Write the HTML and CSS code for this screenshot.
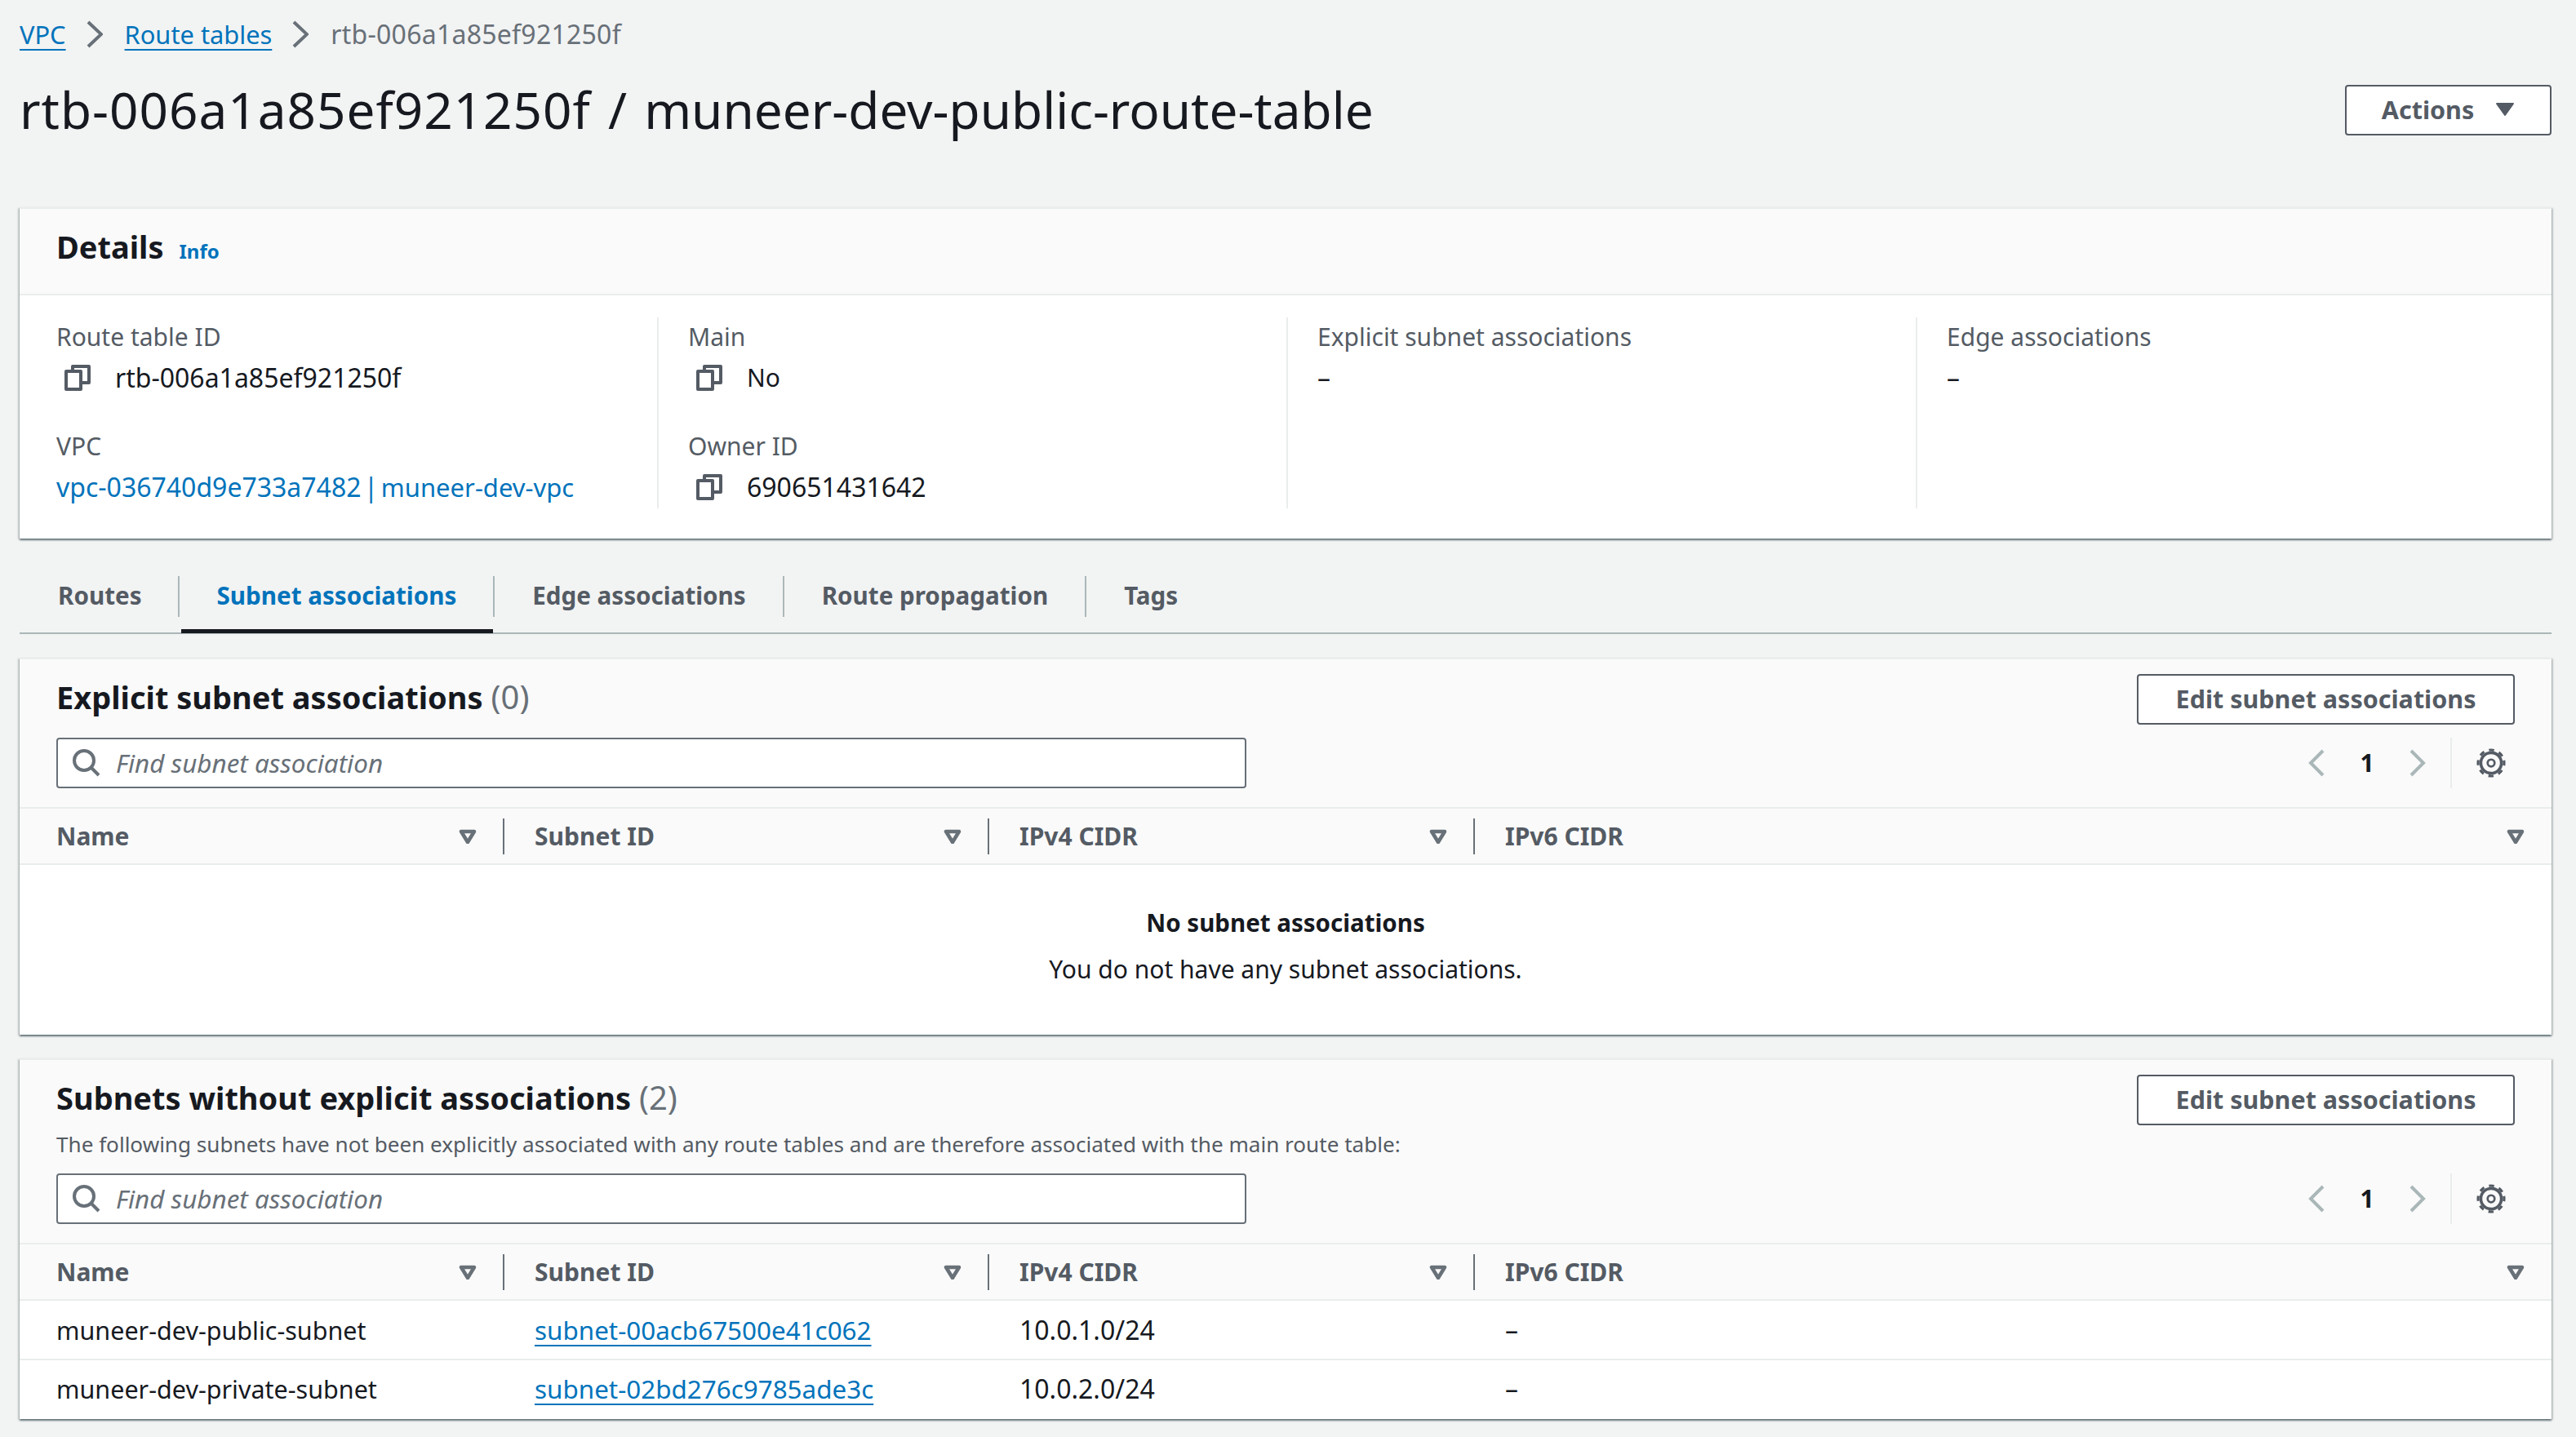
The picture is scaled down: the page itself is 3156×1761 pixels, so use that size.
FILE: index.html
```html
<!DOCTYPE html>
<html lang="en">
<head>
  <meta charset="UTF-8">
  <title>rtb-006a1a85ef921250f / muneer-dev-public-route-table</title>
  <link rel="stylesheet" href="styles.css">
</head>
<body>
  <nav class="crumbs">
    <a href="#">VPC</a>
    <svg class="crumb-sep" viewBox="0 0 20 34"><path d="M2 2l16 15L2 32"/></svg>
    <a href="#">Route tables</a>
    <svg class="crumb-sep" viewBox="0 0 20 34"><path d="M2 2l16 15L2 32"/></svg>
    <span class="crumb-id">rtb-006a1a85ef921250f</span>
  </nav>

  <header class="page-head">
    <h1><span class="title-id">rtb-006a1a85ef921250f</span> / muneer-dev-public-route-table</h1>
    <button class="btn btn-actions" type="button">Actions
      <svg class="caret" viewBox="0 0 24 18"><path d="M2 2h20L12 16z"/></svg>
    </button>
  </header>

  <section class="card card-details">
    <div class="details-head">
      <h2>Details</h2>
      <a class="info" href="#">Info</a>
    </div>
    <div class="details-body">
      <div class="col">
        <div class="item">
          <div class="label">Route table ID</div>
          <div class="value">
            <svg class="copy" viewBox="0 0 16 16"><path d="M1 4h9v11H1z"/><path d="M5 4V1h10v10h-5"/></svg>
            rtb-006a1a85ef921250f
          </div>
        </div>
        <div class="item">
          <div class="label">VPC</div>
          <div class="value plain"><a class="vpc-link" href="#">vpc-036740d9e733a7482 | <span>muneer-dev-vpc</span></a></div>
        </div>
      </div>
      <div class="col">
        <div class="item">
          <div class="label">Main</div>
          <div class="value">
            <svg class="copy" viewBox="0 0 16 16"><path d="M1 4h9v11H1z"/><path d="M5 4V1h10v10h-5"/></svg>
            <span class="value-word">No</span>
          </div>
        </div>
        <div class="item">
          <div class="label">Owner ID</div>
          <div class="value">
            <svg class="copy" viewBox="0 0 16 16"><path d="M1 4h9v11H1z"/><path d="M5 4V1h10v10h-5"/></svg>
            690651431642
          </div>
        </div>
      </div>
      <div class="col">
        <div class="item">
          <div class="label">Explicit subnet associations</div>
          <div class="value plain">–</div>
        </div>
      </div>
      <div class="col">
        <div class="item">
          <div class="label">Edge associations</div>
          <div class="value plain">–</div>
        </div>
      </div>
    </div>
  </section>

  <div class="tabs">
    <a class="tab" href="#">Routes</a>
    <a class="tab active" href="#">Subnet associations</a>
    <a class="tab" href="#">Edge associations</a>
    <a class="tab" href="#">Route propagation</a>
    <a class="tab" href="#">Tags</a>
  </div>

  <section class="card card-explicit">
    <div class="table-head">
      <div class="title-row">
        <h2>Explicit subnet associations <span class="count">(0)</span></h2>
        <button class="btn btn-edit" type="button">Edit subnet associations</button>
      </div>
      <div class="tools">
        <div class="search">
          <svg class="search-icon" viewBox="0 0 34 34"><circle cx="14" cy="14" r="12"/><path d="M23 23l9 9"/></svg>
          <span>Find subnet association</span>
        </div>
        <div class="pager">
          <svg class="pg" viewBox="0 0 20 34"><path d="M18 2L3 17l15 15"/></svg>
          <b>1</b>
          <svg class="pg" viewBox="0 0 20 34"><path d="M2 2l15 15L2 32"/></svg>
          <div class="pager-line"></div>
          <svg class="gear" viewBox="0 0 16 16"><circle class="teeth" cx="8" cy="8" r="7.1" transform="rotate(-11.25 8 8)"/><circle cx="8" cy="8" r="5.6"/><circle class="hub" cx="8" cy="8" r="1.9"/></svg>
        </div>
      </div>
    </div>
    <div class="row row-head">
      <div class="cell"><div class="cell-in">Name<svg class="sort" viewBox="0 0 22 18"><path d="M3 3h16l-8 13z"/></svg></div></div>
      <div class="cell"><div class="cell-in">Subnet ID<svg class="sort" viewBox="0 0 22 18"><path d="M3 3h16l-8 13z"/></svg></div></div>
      <div class="cell"><div class="cell-in">IPv4 CIDR<svg class="sort" viewBox="0 0 22 18"><path d="M3 3h16l-8 13z"/></svg></div></div>
      <div class="cell"><div class="cell-in">IPv6 CIDR<svg class="sort" viewBox="0 0 22 18"><path d="M3 3h16l-8 13z"/></svg></div></div>
    </div>
    <div class="empty">
      <b>No subnet associations</b>
      <p>You do not have any subnet associations.</p>
    </div>
  </section>

  <section class="card card-implicit">
    <div class="table-head">
      <div class="title-row">
        <h2>Subnets without explicit associations <span class="count">(2)</span></h2>
        <button class="btn btn-edit" type="button">Edit subnet associations</button>
      </div>
      <p class="desc">The following subnets have not been explicitly associated with any route tables and are therefore associated with the main route table:</p>
      <div class="tools">
        <div class="search">
          <svg class="search-icon" viewBox="0 0 34 34"><circle cx="14" cy="14" r="12"/><path d="M23 23l9 9"/></svg>
          <span>Find subnet association</span>
        </div>
        <div class="pager">
          <svg class="pg" viewBox="0 0 20 34"><path d="M18 2L3 17l15 15"/></svg>
          <b>1</b>
          <svg class="pg" viewBox="0 0 20 34"><path d="M2 2l15 15L2 32"/></svg>
          <div class="pager-line"></div>
          <svg class="gear" viewBox="0 0 16 16"><circle class="teeth" cx="8" cy="8" r="7.1" transform="rotate(-11.25 8 8)"/><circle cx="8" cy="8" r="5.6"/><circle class="hub" cx="8" cy="8" r="1.9"/></svg>
        </div>
      </div>
    </div>
    <div class="row row-head">
      <div class="cell"><div class="cell-in">Name<svg class="sort" viewBox="0 0 22 18"><path d="M3 3h16l-8 13z"/></svg></div></div>
      <div class="cell"><div class="cell-in">Subnet ID<svg class="sort" viewBox="0 0 22 18"><path d="M3 3h16l-8 13z"/></svg></div></div>
      <div class="cell"><div class="cell-in">IPv4 CIDR<svg class="sort" viewBox="0 0 22 18"><path d="M3 3h16l-8 13z"/></svg></div></div>
      <div class="cell"><div class="cell-in">IPv6 CIDR<svg class="sort" viewBox="0 0 22 18"><path d="M3 3h16l-8 13z"/></svg></div></div>
    </div>
    <div class="row row-body">
      <div class="cell cell-name">muneer-dev-public-subnet</div>
      <div class="cell"><a href="#">subnet-00acb67500e41c062</a></div>
      <div class="cell">10.0.1.0/24</div>
      <div class="cell">–</div>
    </div>
    <div class="row row-body">
      <div class="cell cell-name">muneer-dev-private-subnet</div>
      <div class="cell"><a href="#">subnet-02bd276c9785ade3c</a></div>
      <div class="cell">10.0.2.0/24</div>
      <div class="cell">–</div>
    </div>
  </section>
</body>
</html>
```

FILE: styles.css
```css
* {
  box-sizing: border-box;
}
body {
  margin: 0;
  padding: 0 30px 22px 24px;
  background-color: #f2f3f3;
  color: #16191f;
  font-family: "Noto Sans", Arial, sans-serif;
  font-size: 32px;
  line-height: 48px;
}
a {
  color: #0073bb;
  text-decoration: none;
}
h1, h2, p {
  margin: 0;
  font-weight: normal;
}

/* breadcrumb */
.crumbs {
  display: flex;
  align-items: center;
  height: 84px;
  color: #687078;
  font-size: 30.8px;
}
.crumbs a {
  text-decoration: underline;
  text-decoration-thickness: 2px;
  text-underline-offset: 6px;
}
.crumb-sep {
  width: 20px;
  height: 34px;
  margin: 0 27px 0 25px;
  fill: none;
  stroke: #687078;
  stroke-width: 4;
}
.crumb-id {
  font-size: 32px;
  letter-spacing: 0.25px;
}

/* title */
.page-head {
  display: flex;
  justify-content: space-between;
  align-items: flex-start;
  height: 170px;
  padding-top: 20px;
}
h1 {
  font-size: 62px;
  line-height: 60px;
  word-spacing: 5px;
}
.title-id {
  letter-spacing: 1px;
}
.btn {
  display: flex;
  align-items: center;
  justify-content: center;
  padding: 0 0 2px;
  border: 2px solid #545b64;
  border-radius: 4px;
  background: #fff;
  color: #545b64;
  font-family: inherit;
  font-size: 30.5px;
  font-weight: 700;
}
.btn-actions {
  width: 253px;
  height: 62px;
  gap: 26px;
}
.caret {
  width: 24px;
  height: 18px;
  fill: #545b64;
  stroke: #545b64;
  stroke-width: 2;
  stroke-linejoin: round;
}

/* cards */
.card {
  background: #fff;
  border-top: 2px solid #eaeded;
  box-shadow: 0 2px 2px rgba(0, 28, 36, 0.5), 2px 1px 2px rgba(0, 28, 36, 0.15), -2px 1px 2px rgba(0, 28, 36, 0.15);
}
.details-head {
  display: flex;
  align-items: baseline;
  gap: 19px;
  height: 106px;
  padding: 18px 46px 0 45px;
  background: #fafafa;
  border-bottom: 2px solid #eaeded;
}
h2 {
  font-size: 38px;
  line-height: 56px;
  font-weight: 700;
}
.info {
  font-size: 24px;
  font-weight: 700;
}
.details-body {
  display: grid;
  grid-template-columns: 781px 771px 771px 1fr;
  padding: 27px 0 37px;
}
.col {
  display: flex;
  flex-direction: column;
  gap: 36px;
  height: 234px;
  padding-left: 36px;
  border-left: 2px solid #eaeded;
}
.col:first-child {
  padding-left: 45px;
  border-left: 0;
}
.label {
  height: 48px;
  color: #545b64;
  font-size: 30px;
}
.value {
  display: flex;
  align-items: center;
  gap: 30px;
  height: 50px;
  padding: 2px 0 0 10px;
}
.value.plain {
  padding-left: 0;
}
.value-word {
  font-size: 30px;
}
.vpc-link {
  word-spacing: -5px;
}
.vpc-link span {
  font-size: 31px;
}
.copy {
  width: 32px;
  height: 32px;
  fill: none;
  stroke: #545b64;
  stroke-width: 2;
  stroke-linejoin: round;
}

/* tabs */
.tabs {
  display: flex;
  align-items: flex-start;
  height: 117px;
  padding-top: 46px;
  border-bottom: 2px solid #aab7b8;
}
.tab {
  position: relative;
  height: 50px;
  padding: 0 45px 0 46px;
  color: #545b64;
  font-size: 29.6px;
  font-weight: 700;
  border-left: 2px solid #aab7b8;
}
.tab:first-child {
  padding: 0 44px 0 47px;
  border-left: 0;
}
.tab.active {
  color: #0073bb;
}
.tab.active::after {
  content: "";
  position: absolute;
  left: 2px;
  right: 0;
  top: 65px;
  height: 5px;
  background: #16191f;
}

/* table cards */
.card-explicit {
  margin-top: 29px;
  height: 462px;
}
.card-implicit {
  margin-top: 29px;
  height: 442px;
}
.table-head {
  padding: 18px 45px 0 45px;
  background: #fafafa;
}
.title-row {
  display: flex;
  justify-content: space-between;
  align-items: flex-start;
}
.count {
  color: #687078;
  font-size: 40px;
  font-weight: 400;
}
.btn-edit {
  width: 463px;
  height: 62px;
}
.desc {
  margin-top: 3px;
  color: #545b64;
  font-size: 26.1px;
  line-height: 40px;
}
.tools {
  display: flex;
  justify-content: space-between;
  padding: 16px 0 23px;
}
.search {
  display: flex;
  align-items: center;
  gap: 19px;
  width: 1458px;
  height: 62px;
  padding-left: 18px;
  background: #fff;
  border: 2px solid #687078;
  border-radius: 4px;
  color: #687078;
  font-size: 31.4px;
  font-style: italic;
}
.search-icon {
  width: 34px;
  height: 34px;
  fill: none;
  stroke: #687078;
  stroke-width: 4;
}
.pager {
  display: flex;
  align-items: center;
  height: 62px;
}
.pager b {
  width: 104px;
  text-align: center;
  font-size: 30px;
}
.pg {
  width: 20px;
  height: 34px;
  fill: none;
  stroke: #aab7b8;
  stroke-width: 4;
}
.pager-line {
  width: 2px;
  height: 62px;
  margin: 0 30px;
  background: #eaeded;
}
.gear {
  width: 36px;
  height: 36px;
  margin-right: 11px;
  fill: none;
  stroke: #545b64;
  stroke-width: 1.6;
}
.gear .teeth {
  stroke-width: 1.4;
  stroke-dasharray: 2.79 2.79;
}
.gear .hub {
  stroke-width: 1.2;
}
.row {
  display: grid;
  grid-template-columns: 594px 594px 595px 1fr;
  align-items: center;
  border-top: 2px solid #eaeded;
}
.row-head {
  height: 71px;
  background: #fafafa;
  color: #545b64;
  font-size: 30px;
  font-weight: 700;
  border-bottom: 2px solid #eaeded;
}
.row-head .cell {
  padding-left: 37px;
}
.row-head .cell:first-child {
  padding-left: 45px;
}
.cell-in {
  display: flex;
  align-items: center;
  justify-content: space-between;
  height: 44px;
  padding-right: 32px;
  border-right: 2px solid #687078;
}
.cell:last-child .cell-in {
  padding-right: 33px;
  border-right: 0;
}
.sort {
  width: 22px;
  height: 18px;
  fill: none;
  stroke: #687078;
  stroke-width: 4.5;
  stroke-linejoin: round;
}
.empty {
  padding-top: 42px;
  text-align: center;
  font-size: 30px;
  line-height: 57px;
}
.empty b {
  font-size: 29.5px;
}
.row-body {
  height: 71px;
}
.row-head + .row-body {
  border-top: 0;
}
.row-body .cell {
  padding-left: 37px;
}
.row-body .cell-name {
  padding-left: 45px;
  font-size: 30.5px;
}
.row-body a {
  font-size: 31.4px;
  text-decoration: underline;
  text-decoration-thickness: 2px;
  text-underline-offset: 6px;
}
```
